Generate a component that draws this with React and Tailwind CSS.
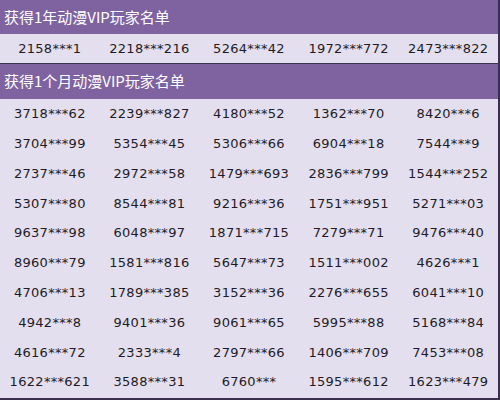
import React from "react";

const yearList = ["2158***1", "2218***216", "5264***42", "1972***772", "2473***822"];

const monthList = [
  "3718***62", "2239***827", "4180***52", "1362***70", "8420***6",
  "3704***99", "5354***45", "5306***66", "6904***18", "7544***9",
  "2737***46", "2972***58", "1479***693", "2836***799", "1544***252",
  "5307***80", "8544***81", "9216***36", "1751***951", "5271***03",
  "9637***98", "6048***97", "1871***715", "7279***71", "9476***40",
  "8960***79", "1581***816", "5647***73", "1511***002", "4626***1",
  "4706***13", "1789***385", "3152***36", "2276***655", "6041***10",
  "4942***8", "9401***36", "9061***65", "5995***88", "5168***84",
  "4616***72", "2333***4", "2797***66", "1406***709", "7453***08",
  "1622***621", "3588***31", "6760***", "1595***612", "1623***479",
];

const Title = ({ children, h }) => (
  <div
    className={`${h} bg-[#7f63a1] text-white text-[15px] pl-[4px] flex items-center`}
    style={{ fontFamily: '"Noto Sans CJK SC", sans-serif' }}
  >
    {children}
  </div>
);

const Cell = ({ name }) => (
  <div className="flex items-center justify-center text-[13px] text-[#1e1b26] tracking-[0.3px]">
    {name}
  </div>
);

const VipList = () => {
  return (
    <div
      className="w-[500px] h-[400px] bg-[#e4dfee] border-r-2 border-b-2 border-[#3b3050] overflow-hidden"
      style={{ fontFamily: '"DejaVu Sans", sans-serif' }}
    >
      {/* 1 year */}
      <Title h="h-[34px]">获得1年动漫VIP玩家名单</Title>
      <div className="h-[30px] grid grid-cols-5 border-b border-[#3b3050]">
        {yearList.map((n) => (
          <Cell key={n} name={n} />
        ))}
      </div>

      {/* 1 month */}
      <Title h="h-[35px]">获得1个月动漫VIP玩家名单</Title>
      <div className="h-[298px] grid grid-cols-5 grid-rows-10">
        {monthList.map((n, i) => (
          <Cell key={i} name={n} />
        ))}
      </div>
    </div>
  );
};

export default function App() {
  return <VipList />;
}
